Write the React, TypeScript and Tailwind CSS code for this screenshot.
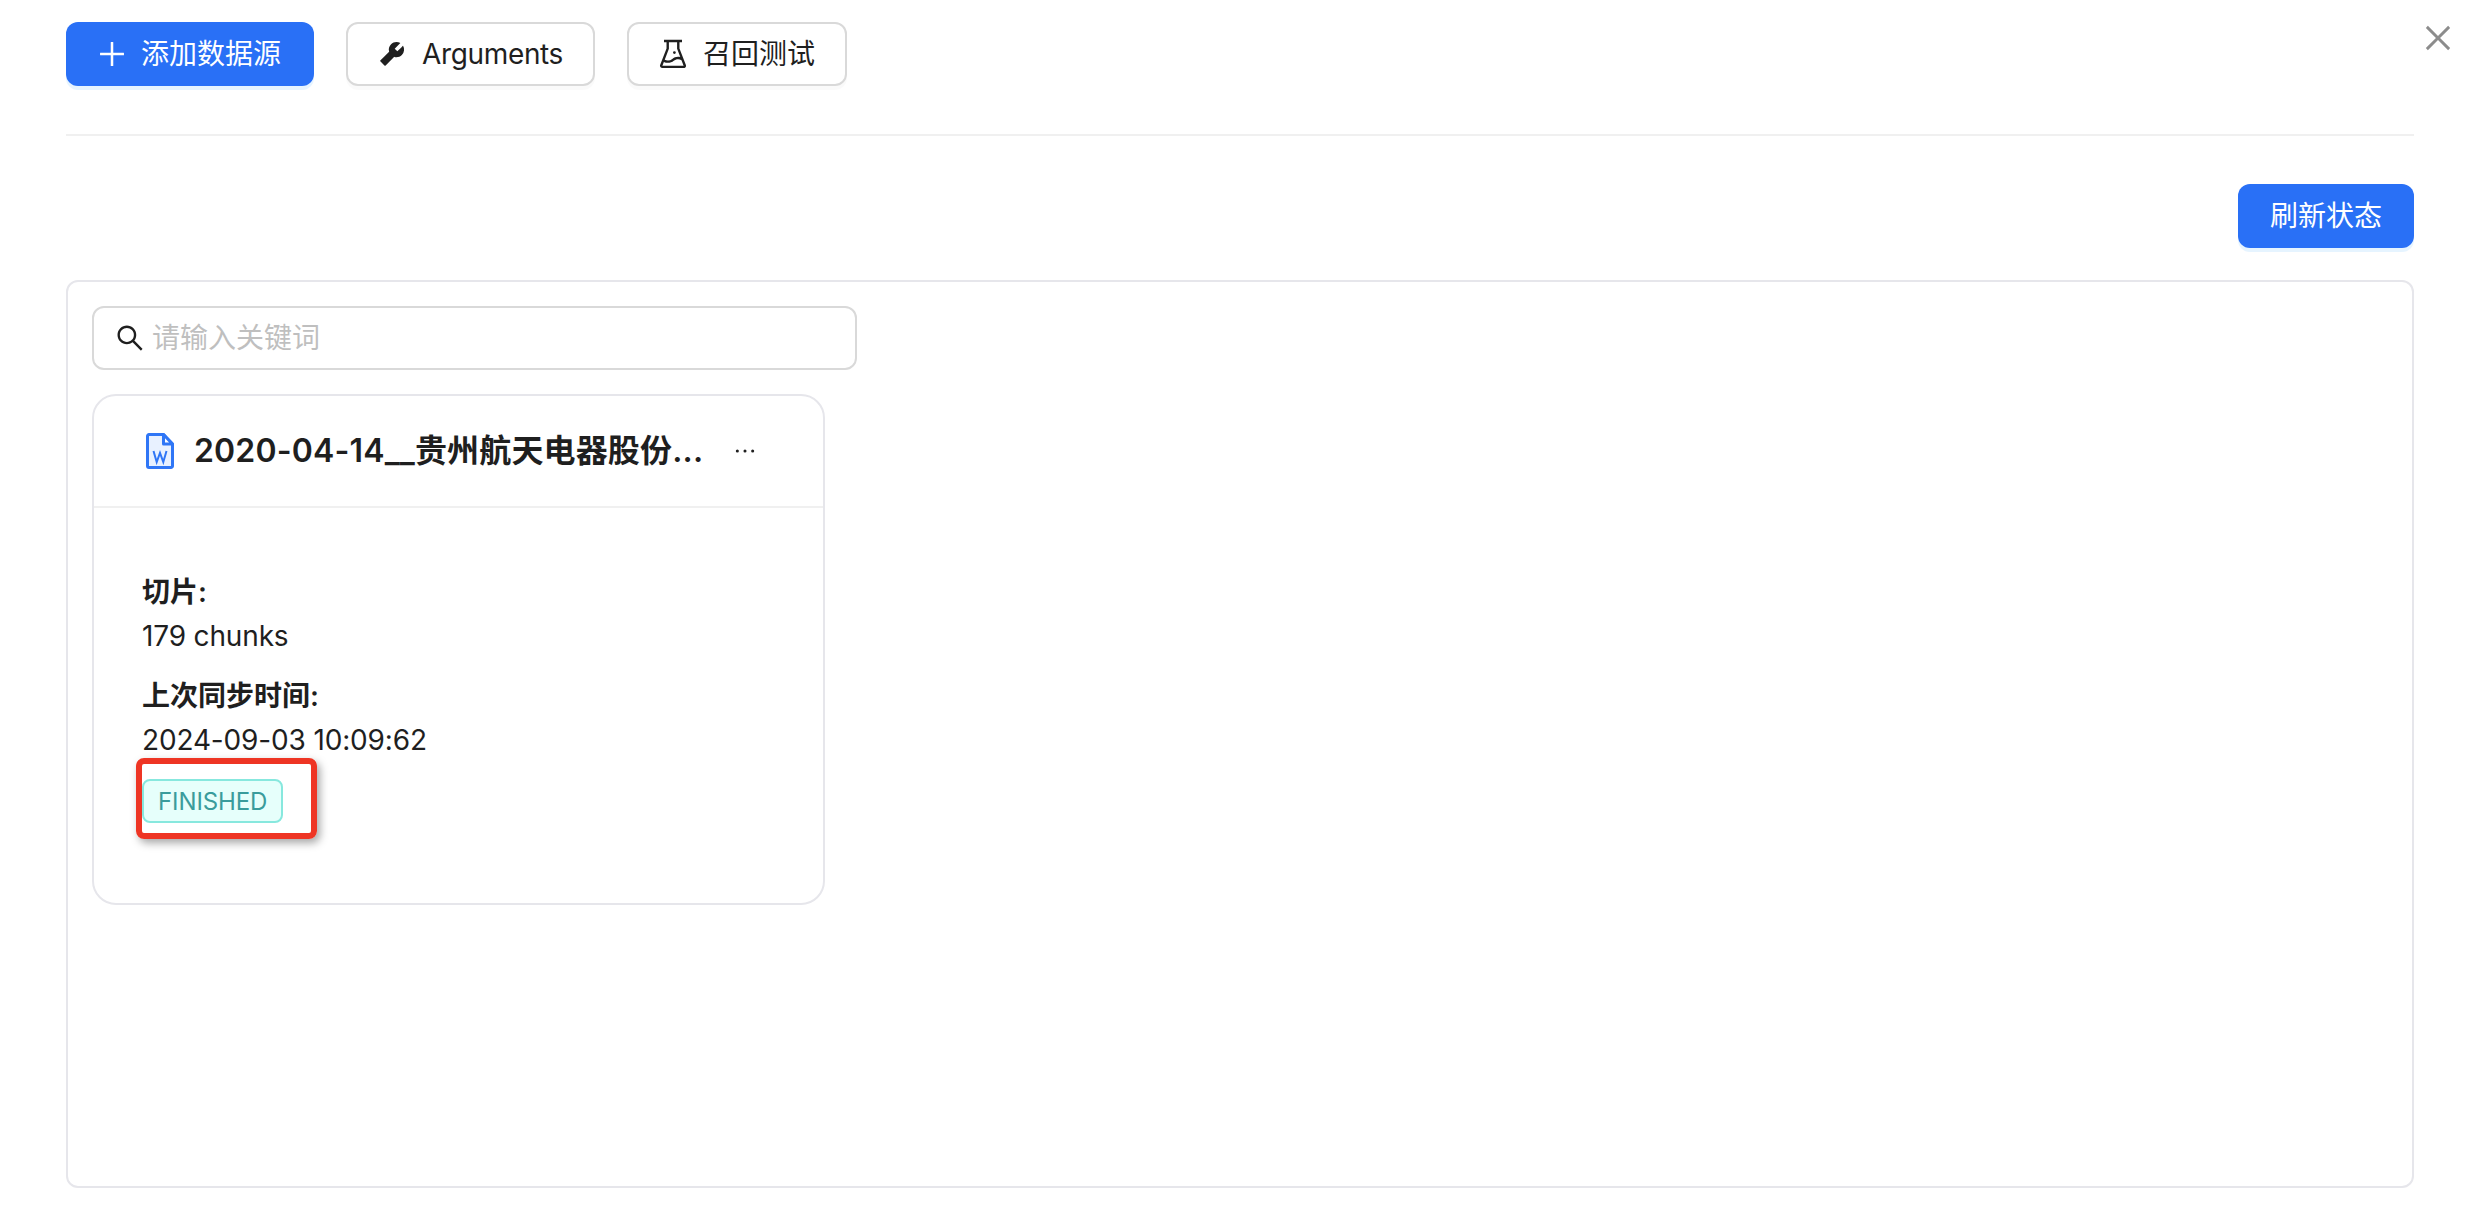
import React from 'react';
import {
  AiFillTool,
  AiOutlineClose,
  AiOutlineEllipsis,
  AiOutlineExperiment,
  AiOutlinePlus,
  AiOutlineSearch,
} from 'react-icons/ai';

// Word document icon used in the card header
const WordIcon = () => (
  <svg width="28" height="36" viewBox="0 0 28 36" className="shrink-0">
    <path
      d="M3 1.5h14.5L26.5 11v22a1.5 1.5 0 0 1-1.5 1.5H3A1.5 1.5 0 0 1 1.5 33V3A1.5 1.5 0 0 1 3 1.5z"
      fill="#e8f1ff"
      stroke="#2f76f6"
      strokeWidth="3"
      strokeLinejoin="round"
    />
    <path d="M17.5 1.5V11h9z" fill="#ffffff" stroke="#2f76f6" strokeWidth="3" strokeLinejoin="round" />
    <path d="M7.5 18l3.2 11 3.3-9 3.3 9 3.2-11" fill="none" stroke="#2f76f6" strokeWidth="2" />
  </svg>
);

const OutlineButton = ({ icon, label, className }: { icon: React.ReactNode; label: string; className?: string }) => (
  <button className="flex h-16 items-center gap-4 rounded-xl border-2 border-[#d9d9d9] bg-white px-[30px] text-[#1f1f1f] shadow-[0_4px_0_rgba(0,0,0,0.02)]">
    {icon}
    <span className={className}>{label}</span>
  </button>
);

export default function App() {
  return (
    <div className="relative h-[1206px] w-[2474px] overflow-hidden bg-white pt-[22px] pr-[60px] pl-[66px] font-[Inter,'Noto_Sans_CJK_SC',sans-serif] text-[28px] leading-[44px] text-[#1f1f1f]">
      <AiOutlineClose className="absolute top-[20px] right-[18px] text-[36px] text-[#8c8c8c]" />

      <div className="flex gap-8">
        <button className="flex h-16 items-center gap-4 rounded-xl bg-[#2970f6] pr-[33px] pl-8 text-white shadow-[0_4px_0_rgba(5,145,255,0.1)]">
          <AiOutlinePlus className="-mx-[3px] text-[34px]" />
          <span className="-ml-px">添加数据源</span>
        </button>
        <OutlineButton
          icon={<AiFillTool className="-mx-0.5 text-[32px]" />}
          label="Arguments"
          className="tracking-[-0.35px]"
        />
        <OutlineButton icon={<AiOutlineExperiment className="-mx-1 text-[36px]" />} label="召回测试" />
      </div>

      <div className="mt-12 h-0.5 bg-[#f0f0f0]" />

      <div className="mt-12 flex justify-end">
        <button className="h-16 rounded-xl bg-[#2970f6] px-8 text-white shadow-[0_4px_0_rgba(5,145,255,0.1)]">
          刷新状态
        </button>
      </div>

      <div className="mt-8 h-[908px] rounded-xl border-2 border-[#e6e6eb] p-6">
        <div className="flex h-[64px] w-[765px] items-center gap-1.5 rounded-xl border-2 border-[#d9d9d9] pr-6 pl-5">
          <AiOutlineSearch className="shrink-0 text-[32px] text-[#1f1f1f]" />
          <input
            className="w-full bg-transparent outline-none placeholder:text-[#bfbfbf]"
            placeholder="请输入关键词"
          />
        </div>

        <div className="mt-6 h-[511px] w-[733px] rounded-3xl border-2 border-[#e6e6eb]">
          <div className="flex h-[112px] items-center border-b-2 border-[#f0f0f0] pr-[64px] pl-[52px]">
            <WordIcon />
            <span className="ml-5 flex-1 text-[32px] font-semibold tracking-[0.15px] whitespace-nowrap">
              2020-04-14__贵州航天电器股份...
            </span>
            <AiOutlineEllipsis className="text-[28px] text-[#1f1f1f]" />
          </div>

          <div className="relative px-12 pt-[62px]">
            <div className="font-semibold">切片:</div>
            <div className="tracking-[-0.15px]">179 chunks</div>
            <div className="mt-4 font-semibold">上次同步时间:</div>
            <div className="tracking-[-0.15px]">2024-09-03 10:09:62</div>
            <span className="mt-[17px] inline-block h-11 rounded-lg border-2 border-[#87e8de] bg-[#e6fffb] px-[14px] text-2xl leading-[41px] tracking-[-0.1px] text-[#3a9c9c]">
              FINISHED
            </span>
            {/* Red annotation drawn over the screenshot */}
            <div className="absolute top-[250px] left-[42px] h-[81px] w-[181px] rounded-lg border-[6px] border-[#ee3524] shadow-[3px_4px_8px_rgba(0,0,0,0.35)]" />
          </div>
        </div>
      </div>
    </div>
  );
}
